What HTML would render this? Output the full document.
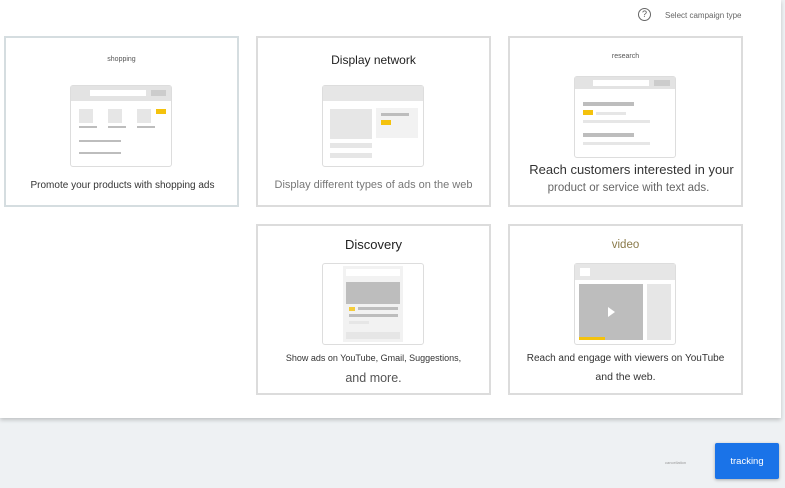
<!DOCTYPE html>
<html><head><style>
*{margin:0;padding:0;box-sizing:border-box}
body{width:785px;height:488px;background:#eef1f3;position:relative;overflow:hidden;font-family:"Liberation Sans",sans-serif;color:#333}
.panel{position:absolute;left:0;top:0;width:781px;height:418px;background:#fff;box-shadow:0 2px 4px rgba(0,0,0,.2)}
.card{position:absolute;width:235px;height:171px;border:2px solid #dcdcdc;background:#fff}
.a{position:absolute}
.t{position:absolute;left:0;right:0;text-align:center;white-space:nowrap}
.frame{position:absolute;border:1px solid #ddd;border-radius:3px;background:#fff}
.g{position:absolute;background:#e6e6e6}
.d{position:absolute;background:#bdbdbd}
.y{position:absolute;background:#f4c20d}
</style></head><body>
<div class="panel">
<div class="a" style="left:638px;top:8px;width:13px;height:13px;border:1px solid #666;border-radius:50%;font-size:9px;text-align:center;line-height:11px;color:#555">?</div>
<div class="a" style="left:665px;top:11px;font-size:8px;color:#666">Select campaign type</div>

<div class="card" style="left:4px;top:36px;border-color:#d5dde0">
 <div class="t" style="top:18px;font-size:7px;color:#555">shopping</div>
 <div class="frame" style="left:64px;top:47px;width:102px;height:82px">
  <div class="g" style="left:0;top:0;width:100%;height:15px;background:#e3e3e3"></div>
  <div class="a" style="left:19px;top:4px;width:56px;height:6px;background:#fff"></div>
  <div class="d" style="left:80px;top:4px;width:15px;height:6px;background:#ccc"></div>
  <div class="g" style="left:8px;top:23px;width:14px;height:14px"></div>
  <div class="g" style="left:37px;top:23px;width:14px;height:14px"></div>
  <div class="g" style="left:66px;top:23px;width:14px;height:14px"></div>
  <div class="y" style="left:85px;top:23px;width:10px;height:5px"></div>
  <div class="d" style="left:8px;top:40px;width:18px;height:2px"></div>
  <div class="d" style="left:37px;top:40px;width:18px;height:2px"></div>
  <div class="d" style="left:66px;top:40px;width:18px;height:2px"></div>
  <div class="d" style="left:8px;top:54px;width:42px;height:2px"></div>
  <div class="d" style="left:8px;top:66px;width:42px;height:2px"></div>
 </div>
 <div class="t" style="top:142px;font-size:10px;color:#333;padding-left:2px">Promote your products with shopping ads</div>
</div>

<div class="card" style="left:256px;top:36px">
 <div class="t" style="top:15px;font-size:12px;color:#222">Display network</div>
 <div class="frame" style="left:64px;top:47px;width:102px;height:82px">
  <div class="g" style="left:0;top:0;width:100%;height:15px"></div>
  <div class="g" style="left:7px;top:23px;width:42px;height:30px"></div>
  <div class="a" style="left:53px;top:22px;width:42px;height:30px;background:#f2f2f2"></div>
  <div class="d" style="left:58px;top:27px;width:28px;height:3px"></div>
  <div class="y" style="left:58px;top:34px;width:10px;height:5px"></div>
  <div class="g" style="left:7px;top:57px;width:42px;height:5px"></div>
  <div class="g" style="left:7px;top:67px;width:42px;height:5px"></div>
 </div>
 <div class="t" style="top:141px;font-size:11px;color:#777">Display different types of ads on the web</div>
</div>

<div class="card" style="left:508px;top:36px">
 <div class="t" style="top:15px;font-size:7px;color:#555">research</div>
 <div class="frame" style="left:64px;top:38px;width:102px;height:82px">
  <div class="g" style="left:0;top:0;width:100%;height:12px;background:#e3e3e3"></div>
  <div class="a" style="left:18px;top:3px;width:56px;height:6px;background:#fff"></div>
  <div class="d" style="left:79px;top:3px;width:16px;height:6px;background:#ccc"></div>
  <div class="d" style="left:8px;top:25px;width:51px;height:4px"></div>
  <div class="y" style="left:8px;top:33px;width:10px;height:5px"></div>
  <div class="g" style="left:21px;top:35px;width:30px;height:3px"></div>
  <div class="g" style="left:8px;top:43px;width:67px;height:3px"></div>
  <div class="d" style="left:8px;top:56px;width:51px;height:4px"></div>
  <div class="g" style="left:8px;top:65px;width:67px;height:3px"></div>
 </div>
 <div class="t" style="top:124px;font-size:13px;color:#333;padding-left:12px">Reach customers interested in your</div>
 <div class="t" style="top:144px;font-size:11.5px;color:#666;padding-left:6px">product or service with text ads.</div>
</div>

<div class="card" style="left:256px;top:224px">
 <div class="t" style="top:11px;font-size:13px;color:#222">Discovery</div>
 <div class="frame" style="left:64px;top:37px;width:102px;height:82px">
  <div class="a" style="left:20px;top:2px;width:60px;height:76px;background:#f2f2f2"></div>
  <div class="a" style="left:23px;top:5px;width:54px;height:7px;background:#fff"></div>
  <div class="d" style="left:23px;top:18px;width:54px;height:22px"></div>
  <div class="y" style="left:26px;top:43px;width:6px;height:4px;opacity:.8"></div>
  <div class="d" style="left:35px;top:43px;width:40px;height:3px"></div>
  <div class="d" style="left:26px;top:50px;width:49px;height:3px"></div>
  <div class="g" style="left:26px;top:57px;width:20px;height:3px"></div>
  <div class="g" style="left:23px;top:68px;width:54px;height:7px"></div>
 </div>
 <div class="t" style="top:127px;font-size:9px;color:#333">Show ads on YouTube, Gmail, Suggestions,</div>
 <div class="t" style="top:145px;font-size:12.5px;color:#555">and more.</div>
</div>

<div class="card" style="left:508px;top:224px">
 <div class="t" style="top:13px;font-size:11.5px;color:#8a7a4a">video</div>
 <div class="frame" style="left:64px;top:37px;width:102px;height:82px">
  <div class="g" style="left:0;top:0;width:100%;height:16px"></div>
  <div class="a" style="left:5px;top:4px;width:10px;height:8px;background:#fff"></div>
  <div class="d" style="left:4px;top:20px;width:64px;height:56px"></div>
  <div class="a" style="left:33px;top:43px;width:0;height:0;border-left:7px solid #fff;border-top:5px solid transparent;border-bottom:5px solid transparent"></div>
  <div class="y" style="left:4px;top:73px;width:26px;height:3px"></div>
  <div class="g" style="left:72px;top:20px;width:24px;height:56px"></div>
 </div>
 <div class="t" style="top:127px;font-size:10px;color:#333">Reach and engage with viewers on YouTube</div>
 <div class="t" style="top:145px;font-size:10.5px;color:#333">and the web.</div>
</div>
</div>

<div class="a" style="left:665px;top:460px;font-size:4px;color:#999">cancellation</div>
<div class="a" style="left:715px;top:443px;width:64px;height:36px;background:#1a73e8;border-radius:2px;box-shadow:0 1px 3px rgba(0,0,0,.3);color:#fff;font-size:9.5px;text-align:center;line-height:38px">tracking</div>
</body></html>
